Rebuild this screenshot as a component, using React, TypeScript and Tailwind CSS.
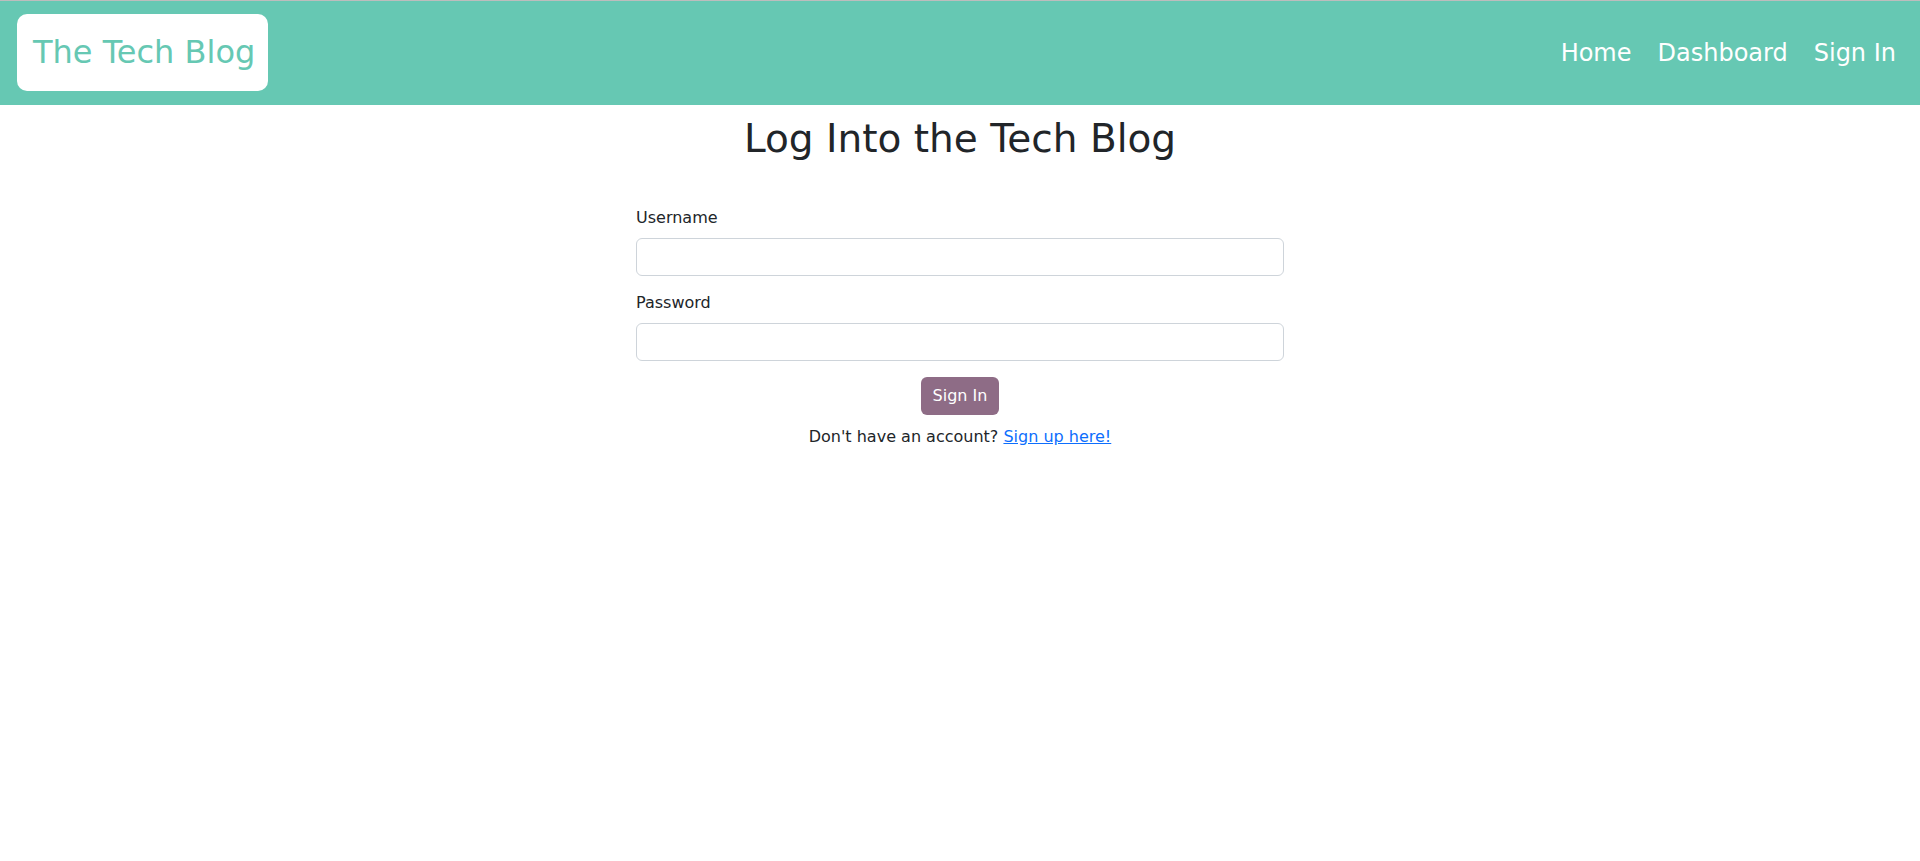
import React from "react";

export default function App() {
  const font = { fontFamily: '"DejaVu Sans", sans-serif' };
  return (
    <div className="min-h-[861px] bg-white text-[#212529]" style={font}>
      <header className="h-[105px] border-t border-[#bdbdbd] bg-[#66c8b3] flex items-center justify-between pl-[17px] pr-[24px]">
        <div className="h-[77px] w-[251px] bg-white rounded-[10px] flex items-center pl-[16px] mt-[-2px]">
          <span className="text-[32px] leading-none text-[#66c8b3]">The Tech Blog</span>
        </div>
        <nav className="flex items-center gap-[26px] text-[24px] text-white mt-[0px]">
          <a href="#">Home</a>
          <a href="#">Dashboard</a>
          <a href="#">Sign In</a>
        </nav>
      </header>
      <main className="flex flex-col items-center">
        <h1 className="mt-[10px] text-[39px] leading-[47px] text-[#212529]">Log Into the Tech Blog</h1>
        <form className="w-[648px] mt-[44px] flex flex-col" onSubmit={(e) => e.preventDefault()}>
          <label className="text-[16px] leading-[24px] mb-[8px]">Username</label>
          <input type="text" className="h-[38px] w-full border border-[#ced4da] rounded-[6px] px-3 outline-none" />
          <label className="text-[16px] leading-[24px] mt-[15px] mb-[8px]">Password</label>
          <input type="password" className="h-[38px] w-full border border-[#ced4da] rounded-[6px] px-3 outline-none" />
          <div className="flex justify-center mt-[16px]">
            <button type="submit" className="h-[38px] w-[78px] bg-[#8e6c86] text-white text-[16px] rounded-[6px]">Sign In</button>
          </div>
          <p className="mt-[10px] text-center text-[16px] leading-[24px]">
            Don't have an account? <a href="#" className="text-[#0d6efd] underline">Sign up here!</a>
          </p>
        </form>
      </main>
    </div>
  );
}
